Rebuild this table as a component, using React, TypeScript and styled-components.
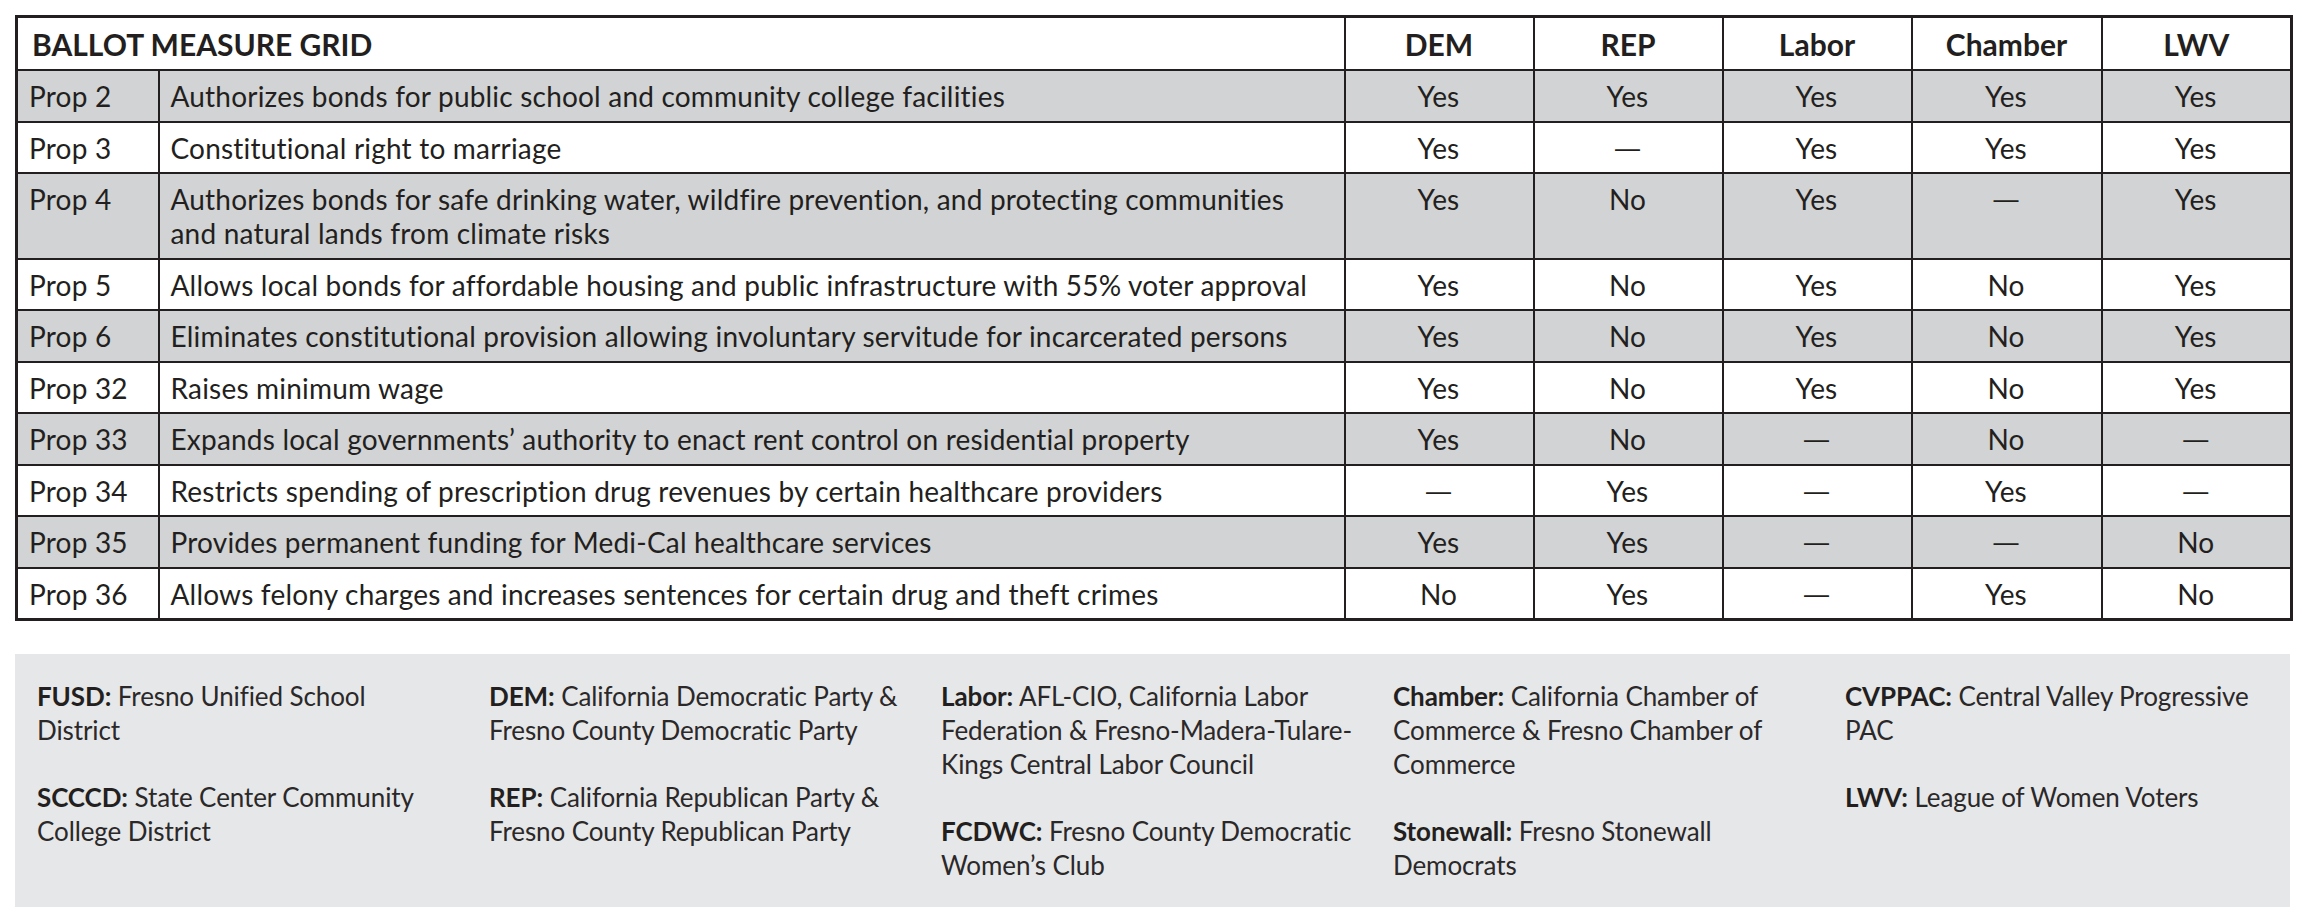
import React from 'react';
import styled, { createGlobalStyle } from 'styled-components';

const GlobalStyle = createGlobalStyle`
  html, body { margin: 0; padding: 0; background: #ffffff; }
  body { font-family: Lato, "Open Sans", "Liberation Sans", sans-serif; color: #231f20; }
`;

const Page = styled.div`
  width: 2275px;
  padding: 15px 0 0 15px;
  display: flex;
  flex-direction: column;
  gap: 33px;
`;

const Grid = styled.table`
  width: 2275px;
  table-layout: fixed;
  border-collapse: collapse;
  border: 3px solid #231f20;
`;

const HeadCell = styled.th<{ $left?: boolean }>`
  font-size: 30px;
  font-weight: 700;
  line-height: 34px;
  padding: 9px 14px 8px;
  text-align: ${(p) => (p.$left ? 'left' : 'center')};
  border: 2px solid #231f20;
  background: #ffffff;
  color: #231f20;
`;

const Row = styled.tr<{ $shaded: boolean }>`
  background: ${(p) => (p.$shaded ? '#d1d3d4' : '#ffffff')};
`;

const Cell = styled.td<{ $left?: boolean }>`
  height: 34px;
  font-size: 28px;
  letter-spacing: 0.2px;
  line-height: 34px;
  padding: 8px 12px 7.5px 11px;
  vertical-align: top;
  text-align: ${(p) => (p.$left ? 'left' : 'center')};
  border: 2px solid #231f20;
  color: #231f20;
  white-space: nowrap;
`;

const Dash = styled.span`
  display: inline-block;
  vertical-align: top;
  height: 34px;
  line-height: 34px;
  font-family: "Liberation Sans", Arial, sans-serif;
  font-size: 25px;
  letter-spacing: 0;
`;

const Line = styled.span`
  display: block;
  white-space: nowrap;
`;

const Legend = styled.div`
  background: #e6e7e8;
  padding: 25px 0 25px 22px;
  display: grid;
  grid-template-columns: repeat(5, 452px);
`;

const LegendColumn = styled.div`
  display: flex;
  flex-direction: column;
  gap: 33px;
`;

const Entry = styled.div`
  font-size: 26px;
  letter-spacing: -0.1px;
  line-height: 34px;
  color: #2b2829;
`;

const Abbr = styled.b`
  font-weight: 700;
  color: #231f20;
`;

type Measure = { prop: string; desc: string[]; votes: string[] };

const rows: Measure[] = [
  { prop: 'Prop 2', desc: ['Authorizes bonds for public school and community college facilities'], votes: ['Yes', 'Yes', 'Yes', 'Yes', 'Yes'] },
  { prop: 'Prop 3', desc: ['Constitutional right to marriage'], votes: ['Yes', '—', 'Yes', 'Yes', 'Yes'] },
  {
    prop: 'Prop 4',
    desc: ['Authorizes bonds for safe drinking water, wildfire prevention, and protecting communities', 'and natural lands from climate risks'],
    votes: ['Yes', 'No', 'Yes', '—', 'Yes'],
  },
  { prop: 'Prop 5', desc: ['Allows local bonds for affordable housing and public infrastructure with 55% voter approval'], votes: ['Yes', 'No', 'Yes', 'No', 'Yes'] },
  { prop: 'Prop 6', desc: ['Eliminates constitutional provision allowing involuntary servitude for incarcerated persons'], votes: ['Yes', 'No', 'Yes', 'No', 'Yes'] },
  { prop: 'Prop 32', desc: ['Raises minimum wage'], votes: ['Yes', 'No', 'Yes', 'No', 'Yes'] },
  { prop: 'Prop 33', desc: ['Expands local governments’ authority to enact rent control on residential property'], votes: ['Yes', 'No', '—', 'No', '—'] },
  { prop: 'Prop 34', desc: ['Restricts spending of prescription drug revenues by certain healthcare providers'], votes: ['—', 'Yes', '—', 'Yes', '—'] },
  { prop: 'Prop 35', desc: ['Provides permanent funding for Medi-Cal healthcare services'], votes: ['Yes', 'Yes', '—', '—', 'No'] },
  { prop: 'Prop 36', desc: ['Allows felony charges and increases sentences for certain drug and theft crimes'], votes: ['No', 'Yes', '—', 'Yes', 'No'] },
];

const groups = ['DEM', 'REP', 'Labor', 'Chamber', 'LWV'];
const colWidths = [142, 1186, 189, 189, 189, 190, 190];

type LegendItem = { abbr: string; lines: string[] };

const legend: LegendItem[][] = [
  [
    { abbr: 'FUSD:', lines: ['Fresno Unified School', 'District'] },
    { abbr: 'SCCCD:', lines: ['State Center Community', 'College District'] },
  ],
  [
    { abbr: 'DEM:', lines: ['California Democratic Party &', 'Fresno County Democratic Party'] },
    { abbr: 'REP:', lines: ['California Republican Party &', 'Fresno County Republican Party'] },
  ],
  [
    { abbr: 'Labor:', lines: ['AFL-CIO, California Labor', 'Federation & Fresno-Madera-Tulare-', 'Kings Central Labor Council'] },
    { abbr: 'FCDWC:', lines: ['Fresno County Democratic', 'Women’s Club'] },
  ],
  [
    { abbr: 'Chamber:', lines: ['California Chamber of', 'Commerce & Fresno Chamber of', 'Commerce'] },
    { abbr: 'Stonewall:', lines: ['Fresno Stonewall', 'Democrats'] },
  ],
  [
    { abbr: 'CVPPAC:', lines: ['Central Valley Progressive', 'PAC'] },
    { abbr: 'LWV:', lines: ['League of Women Voters'] },
  ],
];

export default function App() {
  return (
    <>
      <GlobalStyle />
      <Page>
        <Grid>
          <colgroup>
            {colWidths.map((w, i) => (
              <col key={i} style={{ width: w }} />
            ))}
          </colgroup>
          <thead>
            <tr>
              <HeadCell colSpan={2} $left>
                BALLOT MEASURE GRID
              </HeadCell>
              {groups.map((g) => (
                <HeadCell key={g}>{g}</HeadCell>
              ))}
            </tr>
          </thead>
          <tbody>
            {rows.map((r, i) => (
              <Row key={r.prop} $shaded={i % 2 === 0}>
                <Cell $left>{r.prop}</Cell>
                <Cell $left>
                  {r.desc.map((d) => (
                    <Line key={d}>{d}</Line>
                  ))}
                </Cell>
                {r.votes.map((v, j) => (
                  <Cell key={j}>{v === '—' ? <Dash>—</Dash> : v}</Cell>
                ))}
              </Row>
            ))}
          </tbody>
        </Grid>
        <Legend>
          {legend.map((col, ci) => (
            <LegendColumn key={ci}>
              {col.map((item) => (
                <Entry key={item.abbr}>
                  {item.lines.map((l, li) => (
                    <Line key={li}>
                      {li === 0 && (
                        <>
                          <Abbr>{item.abbr}</Abbr>{' '}
                        </>
                      )}
                      {l}
                    </Line>
                  ))}
                </Entry>
              ))}
            </LegendColumn>
          ))}
        </Legend>
      </Page>
    </>
  );
}
